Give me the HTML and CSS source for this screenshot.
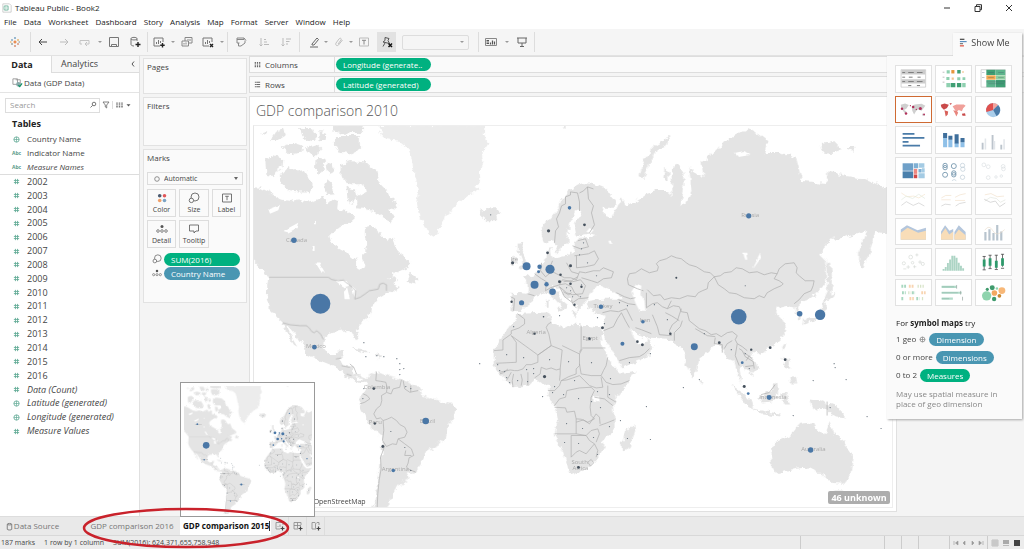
FILE: index.html
```html
<!DOCTYPE html>
<html lang="en">
<head>
<meta charset="utf-8">
<title>Tableau Public - Book2</title>
<link rel="stylesheet" href="styles.css">
</head>
<body>
<svg class="defs" aria-hidden="true">
  <defs>
    <filter id="coast" x="0" y="0" width="100%" height="100%" color-interpolation-filters="sRGB">
      <feTurbulence type="fractalNoise" baseFrequency="0.16" numOctaves="3" seed="4"/>
      <feDisplacementMap in="SourceGraphic" scale="7" xChannelSelector="R" yChannelSelector="G"/>
    </filter>
    <filter id="edge" x="0" y="0" width="100%" height="100%" color-interpolation-filters="sRGB">
      <feTurbulence type="fractalNoise" baseFrequency="0.16" numOctaves="2" seed="9"/>
      <feDisplacementMap in="SourceGraphic" scale="3" xChannelSelector="R" yChannelSelector="G"/>
    </filter>
    <symbol id="ic-num" viewBox="0 0 8 8"><path d="M2.8 1v6M5.2 1v6M1 2.8h6M1 5.2h6" stroke="#63ab97" stroke-width="1" fill="none"/></symbol>
    <symbol id="ic-globe" viewBox="0 0 8 8"><circle cx="4" cy="4" r="3" fill="none" stroke="#63ab97"/><path d="M1 4h6M4 1v6" stroke="#63ab97" stroke-width=".8"/></symbol>
    <symbol id="ic-size" viewBox="0 0 12 12"><circle cx="7" cy="5" r="4" fill="none" stroke="#666" stroke-width=".9"/><circle cx="3.4" cy="8.4" r="2.2" fill="#fafafa" stroke="#666" stroke-width=".9"/></symbol>
    <symbol id="ic-detail" viewBox="0 0 12 12"><circle cx="6" cy="3.6" r="1.5" fill="#555"/><g fill="none" stroke="#666" stroke-width=".8"><circle cx="2" cy="8" r="1.3"/><circle cx="6" cy="8" r="1.3"/><circle cx="10" cy="8" r="1.3"/></g></symbol>

    <g id="world">
      <g filter="url(#coast)" class="land">
        <g transform="translate(250 120) scale(.33333)">
          <path d="M0 200L30 200 60 215 90 235 120 240 150 235 180 245 205 235 225 225 232 250 250 235 265 240 262 265 285 270 295 290 280 310 255 325 238 345 245 368 270 385 300 400 318 415 325 440 338 445 342 420 335 400 350 385 352 365 345 345 345 320 365 315 385 325 395 345 410 360 425 350 432 365 445 395 470 415 482 425 480 440 455 450 430 462 410 475 425 470 440 465 445 478 430 490 450 500 435 510 415 510 400 525 375 540 360 565 355 590 330 610 318 630 327 655 318 658 306 635 290 628 265 632 240 635 222 650 220 680 235 700 255 700 262 690 285 688 280 705 268 718 280 735 306 738 308 765 330 778 350 772 352 782 330 788 300 776 275 748 240 732 200 716 170 700 160 675 135 640 110 612 128 655 142 678 132 672 112 640 96 606 80 592 60 560 50 535 52 490 55 475 45 460 25 435 0 410z"/>
          <path d="M45 115L70 103 100 115 98 135 80 150 70 168 50 165zM100 150L120 140 140 155 165 150 180 175 190 195 175 215 145 215 115 210 95 190 85 170zM60 60L80 30 100 25 105 45 80 60zM95 75L130 65 160 75 158 95 120 100zM150 20L190 22 200 50 185 60 160 50zM165 80L200 70 215 85 190 105zM200 110L220 115 225 145 210 165 198 145zM230 125L250 130 255 150 235 160zM220 190L232 175 250 190 252 220 232 222zM255 45L330 45 330 85 300 100 265 95 255 70zM245 12L340 12 335 35 280 38 245 30zM205 30L235 35 230 60 210 60zM272 130L300 120 350 125 380 150 385 180 410 205 420 230 445 250 440 270 415 265 430 290 425 305 395 290 370 270 350 265 325 262 320 230 345 215 340 190 310 190 285 185 272 165zM290 200L315 205 320 230 300 250 292 230zM275 280L300 275 315 295 300 308 280 300zM480 455L498 470 500 488 470 482zM415 465L432 468 428 476zM30 35L50 30 52 42z"/>
          <path class="ice" d="M385 12L705 12 702 40 715 70 695 100 702 125 690 150 692 180 672 194 690 206 640 235 620 255 590 285 575 310 558 348 530 330 510 290 500 240 507 205 495 165 485 110 475 80 450 60 410 55 395 40z"/>
          <path d="M690 262L705 268 720 262 745 262 750 278 735 298 712 298 695 285z"/>
          <path d="M305 678L330 682 360 697 350 698 320 688zM375 698L400 705 395 712 378 708z"/>
        </g>
        <path transform="translate(350 340) scale(.33333)" d="M80 90L100 100 150 115 205 135 220 165 260 178 300 190 318 205 310 235 290 260 285 300 235 330 215 370 190 400 170 395 180 415 140 440 130 465 105 520 60 520 80 480 85 420 95 340 98 290 60 255 25 190 40 160 55 130 40 112 10 108 0 95 15 98 50 110z"/>
        <path d="M541 233L542 227 555 213 562 198 572 188 583 182 595 183 607 188 616 200 615 207 603 207 605 215 612 217 617 208 622 197 627 205 633 202 647 193 657 190 667 190 673 195 672 167 680 164 685 172 685 185 681 206 687 202 692 192 690 165 696 172 705 177 703 160 713 153 725 140 750 127 768 140 765 152 780 152 797 157 803 180 827 182 827 170 847 175 867 178 887 187 896 188 896 235 877 231 872 246 865 267 860 263 860 250 868 230 847 237 833 238 820 253 827 260 827 280 817 293 803 302 798 307 803 317 799 319 795 307 788 305 780 307 778 313 785 320 787 330 780 340 770 348 760 352 752 350 753 357 760 367 752 375 747 368 740 366 742 383 748 392 744 388 738 373 735 360 728 358 725 350 717 343 712 347 700 358 697 373 693 378 687 365 683 347 677 343 667 338 652 337 646 338 632 330 629 326 637 342 643 345 648 338 655 345 647 358 623 368 618 360 608 343 603 333 603 328 605 315 593 311 587 303 590 300 603 298 622 298 617 292 610 289 600 285 592 290 587 300 584 304 578 310 576 303 567 296 558 287 553 286 562 300 568 305 564 308 555 298 548 292 535 295 530 303 520 310 512 311 511 296 512 292 528 293 528 282 523 278 535 273 540 267 545 262 547 250 551 247 553 258 567 255 575 250 575 242 580 237 593 236 597 234 590 233 577 235 575 227 582 210 577 210 570 222 568 230 568 243 563 246 558 252 555 243 552 240 545 242z"/>
        <path d="M518 243L523 242 523 250 528 262 530 268 519 269 523 261 518 252zM511 258L517 255 518 263 511 266zM640 175L645 160 655 145 673 134 669 142 655 152 648 168 645 178zM562 127l4 -2 0 4zM821 142L835 140 843 148 832 152 822 150zM848 146l8 0 -3 5zM665 168l4 2 0 10 -5 -2zM572 310l6 0 -1 8zM557 307l7 0 -3 4zM546 299l3 0 0 8 -3 0z"/>
        <path d="M828 262L832 262 833 280 831 294 836 292 834 297 827 300 826 312 815 320 805 324 806 318 820 314 825 300 829 290zM785 342l2 2 -3 6 -1 -4zM784 356l6 4 2 8 -5 0zM790 378l6 -2 1 7 -5 0zM701 378l2 2 -1 4zM758 349l5 2 -3 3z"/>
        <path d="M731 384L742 391 752 402 754 408 746 404 738 393zM760 396L770 390 778 382 779 392 773 402 764 403zM782 392l8 -1 -4 5 5 8 -6 0 -3 -6zM752 408l14 3 14 2 0 2 -18 -2zM810 399L822 400 838 406 848 417 838 416 826 409 818 410 812 404z"/>
        <path transform="translate(480 290) scale(.33333)" d="M115 70L205 65 215 95 245 105 255 115 275 100 310 105 360 110 370 130 362 135 368 165 385 200 400 225 425 247 472 240 450 270 410 320 400 345 405 390 405 420 370 450 372 475 355 500 330 530 275 552 265 530 250 490 225 430 235 390 225 345 205 320 210 290 190 282 165 265 145 285 100 290 60 250 42 225 42 180 70 135 90 110 110 80zM465 400L467 425 445 480 428 482 425 455 440 425z"/>
        <path transform="translate(680 120) scale(.33333)" d="M272 980L300 960 335 945 360 910 405 905 410 925 435 945 450 900 465 940 490 960 520 1010 515 1060 490 1090 460 1088 430 1060 415 1060 395 1040 350 1045 285 1060 275 1010zM465 1110L495 1110 485 1140 470 1135z"/>
      </g>
      <g fill="#fff" filter="url(#edge)">
        <path transform="translate(250 120) scale(.33333)" d="M55 265L90 252 85 268 60 278zM100 330L145 305 140 322 115 335zM196 425L208 425 225 455 215 455zM255 478L290 480 300 495 280 500zM282 510L292 500 300 535 284 535zM305 495L318 505 314 530zM188 375h6v15h-6zM192 300h6v10h-6z"/>
        <path d="M632 291L637 283 642 285 641 293 645 300 646 310 640 310 636 302zM755 265L761 253 762 257 754 268zM744 252l3 0 1 8 -2 0zM587 231l3 -4 4 2 -3 4zM609 240l4 0 0 3 -3 0zM735 152l10 -2 6 4 -12 2z"/>
        <path transform="translate(480 290) scale(.33333)" d="M342 318h18v16h-18z"/>
      </g>
      <g class="borders">
        <path transform="translate(250 120) scale(.33333)" d="M57 469H235L245 476 265 480 280 478 295 490 308 500 317 510 315 535 330 530 345 520 358 510 385 505 390 490 400 487 410 492 410 510M98 606L120 612 150 615 170 615 178 622 185 632 193 636 200 630 212 640 220 656M258 715L275 712M300 740L275 735M305 765L290 760"/>
        <path transform="translate(350 340) scale(.33333)" d="M80 95L78 120 92 122 108 125 112 140 110 156 95 165 96 180 92 195 80 205 72 220 80 235 92 232 100 240 102 270 98 300 110 318 128 310 140 312 145 295 165 290 172 275 165 260 150 252 140 240 125 230 112 236 100 240M112 156L124 160 130 145 150 140 155 118M160 120L165 145 180 155 205 150M183 135V155M30 190L45 185 60 175 52 165 40 160M145 295L165 310 185 325 192 345 178 352 175 368 170 380 180 388 198 395M185 345L165 345 168 330M105 315L98 335 92 350 94 385 88 420 84 460 82 505M0 70L12 80 20 100"/>
        <path d="M555 242L556 230 559 226 557 218 560 212 562 205 566 203 566 196 571 194 571 191 578 192 580 201 580 210M580 192L584 190 588 186 589 198 594 205 592 212 595 224 590 232M588 186l6 2M573 245l8 3 8 -2 -3 -8 -8 2M575 255l14 -2 6 -3 4 8 -4 6 -9 2 -9 1 0 -12M553 260l-2 5 0 5 6 3 8 4 6 0 6 2 3 -8 6 1 8 -2 6 0 4 -3 10 4 -2 6 -8 1 -6 4 -6 -2 -10 -3M535 273l7 5 5 3 -1 9 5 -3 9 -3 3 -5 10 2 8 -2 5 6 -3 8 -10 1 -6 -2 -7 -6 5 10 8 6 6 -4 10 -1M560 284l6 -1 6 3 3 6 5 4M511 296l4 2 -1 12M528 293l7 2M542 262l-1 8 5 6 5 -4M617 292l8 4 6 2 5 -1M619 299l10 4 7 1M603 312l8 -2 8 1 8 -3 6 12M604 330l10 -4 4 -8 4 -6M622 312l4 8 4 7M620 360l10 -3 10 -1 5 -3 5 -5M564 281l8 -1 6 -4M567 262l5 9 7 2M564 291l5 3 3 -2M572 299l2 6 3 2"/>
        <path d="M644 290L638 288 629 284 628 278 630 273 636 272 642 268 650 272 658 270 659 266 657 263 660 260 667 258 672 255 677 257 682 258 687 262 690 264 697 266 705 271 711 272 715 276 709 282 708 288 703 290 699 292 696 296 688 295 680 298 672 297 665 299 661 294 654 295 648 289M647 292v15M715 276L721 275 725 272 732 271 737 267 743 268 750 272 758 271 765 274 772 272 778 273 780 268 786 263 795 262 798 267 797 272 800 275 806 280 815 280 814 285 812 290 805 293 800 299 795 303M715 276L719 284 725 288 730 292 737 293 745 297 755 298 760 295 765 297 768 292 775 288 782 285 784 283 780 280 775 278 778 273M647 307L653 303 658 302 663 306 668 308 674 305 680 306 682 311 688 312 690 320 700 328 706 330 712 334 717 333 722 336 728 332 733 331 738 335 736 339 738 343 743 346 748 350M682 308l-2 6 -2 6 -5 4 -3 6 2 5 -12 -1 -2 -8 -5 -12M683 320l-2 6 -6 6 0 8M696 328l12 7 8 1M716 337l-1 6 8 1 0 8M725 348l3 -5 5 -3M738 343l-2 12 4 10M740 348l3 2 3 6 8 5 1 7M745 352l8 6M746 366l8 -1M828 401v14M762 394l8 -2 6 -8M680 320l-8 -5 -6 -3M668 308l4 -8M636 327l6 2 10 4M750 355l-3 5"/>
        <path transform="translate(480 290) scale(.33333)" d="M115 70L135 85 135 100 118 112 95 120 95 130 70 148 70 178 42 180M95 135L110 155 110 215 50 218M95 135L175 193 215 165 208 130 200 110 206 100 215 95M175 193L175 215 155 222 140 222 130 235 115 240 105 240 92 238 60 245M175 193L215 165 248 178 242 235 230 238 215 232 200 236 185 230 182 250 165 262M248 165L300 190V225L290 235 290 250 268 258 245 270 240 285 225 300 205 300M300 185L305 175V105M308 172H378M308 175L300 190M300 220L305 250 335 255 365 255 372 240 380 225 385 200M242 235V250L240 270M245 270L262 268 280 262 300 255 315 270 330 285 350 292 370 290 365 260M365 255L380 275 400 282 425 280 450 270M385 285V320L410 335M262 300L300 292 335 290 345 300 335 320 332 350 335 375 345 385 325 395 305 386 290 385 285 362 262 365 258 352 225 350M262 300L258 320 240 325 225 345M290 385V430H225M290 395L312 388 330 400 350 370 360 380 362 400M290 430L320 435 335 420 355 415M360 405L380 398 405 388M275 500V435L320 435M275 500L290 485 300 480 320 490 345 460 355 480 350 500M320 435L330 450 345 460M355 415L360 430 350 455M345 320L375 325 400 345M100 290L98 270 102 250M125 285L128 268 124 250M145 285V245M80 270L88 258 95 245M60 250L72 246 85 235M325 515l10 -8 8 10 -10 10z"/>
      </g>
      <g class="tiny">
        <path d="M364 342h.1M377 355h.1M384 356h.1M397 358h.1M400 363h.1M400 369h.1M404 368h.1M400 374h.1M366 356h.1M480 363h.1M364 388h.1M391 431h.1M405 447h.1M411 470h.1M411 388h.1M363 398h.1M406 386h.1M491 214h.1M684 387h.1M647 406h.1M651 439h.1M621 420h.1M814 380h.1M836 367h.1M835 363h.1M847 379h.1M868 416h.1M882 428h.1M831 407h.1M746 285h.1M677 277h.1M705 333h.1M732 349h.1M746 353h.1M750 368h.1M794 415h.1M655 304h.1M668 319h.1M700 379h.1M651 353h.1M630 362h.1M597 275h.1M588 262h.1M584 242h.1M582 248h.1M580 254h.1M582 284h.1M571 290h.1M573 296h.1M567 287h.1M581 296h.1M560 315h.1M598 317h.1M605 323h.1M620 302h.1M628 305h.1M507 354h.1M524 357h.1M550 359h.1M569 361h.1M592 362h.1M514 326h.1M575 380h.1M555 386h.1M579 398h.1M601 407h.1M611 378h.1M610 394h.1M567 423h.1M583 428h.1M594 437h.1M565 442h.1M579 443h.1M610 426h.1M628 438h.1M598 391h.1M592 401h.1M598 454h.1M543 396h.1M527 369h.1M534 368h.1M518 380h.1M507 377h.1M510 382h.1M498 364h.1M505 371h.1M500 370h.1M528 381h.1M534 373h.1M553 392h.1M564 394h.1"/>
      </g>
      <g class="maplabel">
        <text x="286" y="241">Canada</text><text x="306" y="347">Mexico</text><text x="364" y="388">Colombia</text><text x="369" y="423">Peru</text><text x="420" y="422">Brazil</text><text x="382" y="471">Argentina</text><text x="742" y="216">Russia</text><text x="802" y="451">Australia</text><text x="527" y="333">Algeria</text><text x="583" y="339">Egypt</text><text x="572" y="464">South</text><text x="573" y="470">Africa</text><text x="594" y="307">Turkey</text><text x="760" y="398">Indonesia</text><text x="511" y="260">Ire</text><text x="640" y="321">Iran</text>
      </g>
      <g class="mid">
        <circle cx="548" cy="252" r="1.4"/><circle cx="513" cy="262" r="1.6"/><circle cx="549" cy="230" r="1.6"/><circle cx="585" cy="224" r="1.4"/><circle cx="571" cy="265" r="1.5"/><circle cx="561" cy="274" r="1.3"/><circle cx="560" cy="281" r="1.5"/><circle cx="571" cy="283" r="1.3"/><circle cx="582" cy="286" r="1.2"/><circle cx="512" cy="301" r="1.2"/><circle cx="575" cy="304" r="1.2"/><circle cx="535" cy="333" r="1.2"/><circle cx="590" cy="338" r="1.3"/><circle cx="545" cy="376" r="1.6"/><circle cx="603" cy="327" r="1.5"/><circle cx="638" cy="341" r="1.3"/><circle cx="671" cy="333" r="1.3"/><circle cx="579" cy="467" r="1.4"/><circle cx="374" cy="388" r="1.4"/><circle cx="375" cy="423" r="1.2"/><circle cx="383" cy="446" r="1.4"/><circle cx="720" cy="342" r="1.4"/><circle cx="752" cy="349" r="1.2"/><circle cx="771" cy="347" r="1.4"/><circle cx="786" cy="359" r="1.4"/><circle cx="745" cy="386" r="1.5"/><circle cx="677" cy="277" r="1"/><circle cx="544" cy="316" r=".8"/><circle cx="643" cy="344" r="1.5"/>
      </g>
      <g class="big">
        <circle cx="320.500" cy="303" r="10"/><circle cx="739.500" cy="316" r="7.800"/><circle cx="821" cy="314" r="5.200"/><circle cx="550.500" cy="268.500" r="4.600"/><circle cx="527" cy="265.500" r="4"/><circle cx="535" cy="284" r="4"/><circle cx="553" cy="291" r="3.300"/><circle cx="522" cy="302" r="2.600"/><circle cx="547" cy="283.500" r="2.200"/><circle cx="540" cy="266" r="2.200"/><circle cx="539" cy="271" r="1.500"/><circle cx="570" cy="207" r="1.800"/><circle cx="601.500" cy="306" r="2.200"/><circle cx="643.500" cy="321" r="1.800"/><circle cx="623" cy="343" r="2"/><circle cx="695" cy="346" r="3.500"/><circle cx="800.500" cy="313" r="2.800"/><circle cx="749.500" cy="215" r="2.600"/><circle cx="811.500" cy="449.500" r="2.700"/><circle cx="770" cy="397" r="2.500"/><circle cx="743" cy="362" r="1.400"/><circle cx="749" cy="393" r="1.400"/><circle cx="294" cy="239.500" r="2.800"/><circle cx="314.500" cy="346.500" r="2.300"/><circle cx="426" cy="420.500" r="3.300"/><circle cx="393.500" cy="470" r="1.800"/>
      </g>
    </g>
  </defs>
</svg>

<div class="app">
  <header class="titlebar">
    <svg class="appicon" viewBox="0 0 12 12"><path d="M1 1h8l2 2v8H1z" fill="#fff" stroke="#bbb" stroke-width=".8"/><circle cx="5" cy="6" r="3.500" fill="#9ccbbb"/><path d="M5 3v6M2 6h6" stroke="#fff" stroke-width=".8"/></svg>
    <h1>Tableau Public - Book2</h1>
    <div class="winbtns">
      <button aria-label="Minimize"><svg viewBox="0 0 10 10"><path d="M2 5h6"/></svg></button>
      <button aria-label="Restore"><svg viewBox="0 0 10 10"><path d="M2 3.500h5v5H2zM3.500 3.500V1.700h5v5H7"/></svg></button>
      <button aria-label="Close"><svg viewBox="0 0 10 10"><path d="M2 2l6 6M8 2l-6 6"/></svg></button>
    </div>
  </header>
  <nav class="menu">
    <button>File</button><button>Data</button><button>Worksheet</button><button>Dashboard</button><button>Story</button><button>Analysis</button><button>Map</button><button>Format</button><button>Server</button><button>Window</button><button>Help</button>
  </nav>

  <div class="toolbar">
    <div class="grp g1"><button aria-label="Start"><svg viewBox="0 0 12 12" stroke-width="1.200"><path d="M6 4.400v3.200M4.400 6h3.200" stroke="#e8762c"/><path d="M6 1v2M3 3.200v1.600M2.200 4h1.600" stroke="#5b8fb5"/><path d="M6 9v2M9 7.200v1.600M8.200 8h1.600" stroke="#c75"/><path d="M9 3.200v1.600M8.200 4h1.600M1 6h1.500" stroke="#e0a040"/><path d="M3 7.200v1.600M2.200 8h1.600M9.500 6H11" stroke="#788"/></svg></button></div>
    <div class="grp g2">
      <button aria-label="Back"><svg viewBox="0 0 12 12"><path d="M10 6H2M5 3L2 6l3 3" stroke="#444"/></svg></button>
      <button aria-label="Forward"><svg viewBox="0 0 12 12"><path d="M2 6h8M7 3l3 3-3 3" stroke="#bbb"/></svg></button>
      <button aria-label="Redo"><svg viewBox="0 0 12 12"><path d="M3 8H1V4.500h9V8H6M8 6L6 8l2 2" stroke="#c4c4c4"/></svg></button>
      <button class="caret" aria-label="Redo menu"></button>
      <button aria-label="Save"><svg viewBox="0 0 12 12"><path d="M1.500 1.500h9v9h-9zM3.500 10.500v-2h5v2" stroke="#777"/></svg></button>
      <button aria-label="New data source"><svg viewBox="0 0 12 12"><path d="M8 5V2.500C8 1 2 1 2 2.500v6C2 9.500 4 10 5 10M2 3c1 1.300 5 1.300 6 0" stroke="#777"/><path d="M9 6v5M6.500 8.500h5" stroke="#222" stroke-width="1.400"/></svg></button>
    </div>
    <div class="grp g3">
      <button aria-label="New worksheet"><svg viewBox="0 0 12 12"><path d="M7 10H1V2h9v4M3.500 8V6M5.500 8V4M7.500 7V5" stroke="#777"/><path d="M9.500 7v4.500M7.200 9.200h4.500" stroke="#222" stroke-width="1.400"/></svg></button>
      <button class="caret" aria-label="New menu"></button>
      <button aria-label="Duplicate"><svg viewBox="0 0 12 12"><path d="M4 5V1.500h7V7H8M1 5h6.500v5H1zM3 8.500V7M5 8.500V6.500M7 4.500V3M9 5V3" stroke="#888"/></svg></button>
      <button aria-label="Clear sheet"><svg viewBox="0 0 12 12"><path d="M7 10H1V2h9v4M3.500 8V6M5.500 8V4M7.500 7V5" stroke="#777"/><path d="M8 8l3 3M11 8l-3 3" stroke="#222" stroke-width="1.400"/></svg></button>
      <button class="caret" aria-label="Clear menu"></button>
    </div>
    <div class="grp g4">
      <button aria-label="Swap"><svg viewBox="0 0 12 12"><path d="M2 3.500h7V2l2 2.500M2 2v5h2.500M3.500 7v3h2.500l4-3V4.500M2 2h7" stroke="#888"/></svg></button>
      <button aria-label="Sort ascending"><svg viewBox="0 0 12 12"><path d="M3 2v8M1.500 8.500L3 10l1.500-1.500M6 3.500h2M6 6h3M6 8.500h5" stroke="#bbb"/></svg></button>
      <button aria-label="Sort descending"><svg viewBox="0 0 12 12"><path d="M3 2v8M1.500 8.500L3 10l1.500-1.500M6 3h5M6 5.500h3.500M6 8h2" stroke="#bbb"/></svg></button>
    </div>
    <div class="grp g5">
      <button aria-label="Highlight"><svg viewBox="0 0 12 12"><path d="M4 8l5-6 1.500 1.500L6 9H4zM2 11h8" stroke="#666"/></svg></button>
      <button class="caret" aria-label="Highlight menu"></button>
      <button aria-label="Group"><svg viewBox="0 0 12 12"><path d="M5 8l3-4c1-1.500-1-2.500-2-1L3 7c-1 2 1 3.500 2.500 2L9.500 4" stroke="#c0c0c0"/></svg></button>
      <button class="caret" aria-label="Group menu"></button>
      <button aria-label="Show labels"><svg viewBox="0 0 12 12"><path d="M1.500 2h9v8h-9z" stroke="#bbb"/><path d="M4 4.300h4M6 4.300V8.500" stroke="#888"/></svg></button>
      <button class="on" aria-label="Fix axes"><svg viewBox="0 0 12 12"><path d="M4 1.500l4 1-1 2 1.500 3L2 6l2-1.500zM4 7l-2 3.500" stroke="#555"/><path d="M7.500 7.500l3.500 3.500M11 7.500L7.500 11" stroke="#111" stroke-width="1.500"/></svg></button>
      <span class="fit"><select aria-label="Fit"><option></option></select></span>
    </div>
    <div class="grp g6">
      <button aria-label="Cards"><svg viewBox="0 0 12 12"><path d="M.5 2.500h11v7H.5z" stroke="#888"/><path d="M1.500 4.500h2.500M1.500 6h2.500M1.500 7.500h2.500M5.500 8.500v-2M7.500 8.500v-4M9.500 8.500v-3" stroke="#555" stroke-width="1.200"/></svg></button>
      <button class="caret" aria-label="Cards menu"></button>
      <button aria-label="Presentation"><svg viewBox="0 0 12 12"><path d="M1 2h10M2 2v5h8V2M6 7v3M4 10.500h4" stroke="#666"/></svg></button>
    </div>
  </div>

  <main class="body">
    <aside class="side">
      <div class="tabs"><button class="active">Data</button><button>Analytics</button><button class="fold" aria-label="Collapse"><svg viewBox="0 0 6 8"><path d="M4 1.500L2 4l2 2.500" stroke="#555" fill="none"/></svg></button></div>
      <div class="source"><svg viewBox="0 0 12 12"><path d="M1 2h5v6H1zM4 3h5v5" fill="none" stroke="#999"/><circle cx="7" cy="8" r="2.500" fill="#8aa"/><path d="M7 9l1.500 1.500L11 7" stroke="#0a8f62" stroke-width="1.200" fill="none"/></svg><span>Data (GDP Data)</span></div>
      <div class="find">
        <label class="box"><input type="text" placeholder="Search" aria-label="Search"><svg viewBox="0 0 8 8"><circle cx="5" cy="3" r="1.800" fill="none" stroke="#777"/><path d="M3.700 4.300L1.500 6.500" stroke="#777"/></svg></label>
        <button aria-label="Filter"><svg viewBox="0 0 8 8"><path d="M1 1h6L4.700 4v3l-1.400-1V4z" fill="none" stroke="#666" stroke-width=".8"/></svg></button>
        <button class="view" aria-label="View"><svg viewBox="0 0 16 8"><path d="M2 1.500v5M4.500 1.500v5M7 1.500v5" stroke="#777" stroke-width="1.500" stroke-dasharray="1.300 .500"/><path d="M11.500 3.200h4l-2 2.400z" fill="#555"/></svg></button>
      </div>
      <h2>Tables</h2>
      <ul class="dims">
        <li><svg><use href="#ic-globe"/></svg>Country Name</li>
        <li><b>Abc</b>Indicator Name</li>
        <li><b>Abc</b><i>Measure Names</i></li>
      </ul>
      <ul class="meas">
        <li><svg><use href="#ic-num"/></svg>2002</li>
        <li><svg><use href="#ic-num"/></svg>2003</li>
        <li><svg><use href="#ic-num"/></svg>2004</li>
        <li><svg><use href="#ic-num"/></svg>2005</li>
        <li><svg><use href="#ic-num"/></svg>2006</li>
        <li><svg><use href="#ic-num"/></svg>2007</li>
        <li><svg><use href="#ic-num"/></svg>2008</li>
        <li><svg><use href="#ic-num"/></svg>2009</li>
        <li><svg><use href="#ic-num"/></svg>2010</li>
        <li><svg><use href="#ic-num"/></svg>2011</li>
        <li><svg><use href="#ic-num"/></svg>2012</li>
        <li><svg><use href="#ic-num"/></svg>2013</li>
        <li><svg><use href="#ic-num"/></svg>2014</li>
        <li><svg><use href="#ic-num"/></svg>2015</li>
        <li><svg><use href="#ic-num"/></svg>2016</li>
        <li><svg><use href="#ic-num"/></svg><i>Data (Count)</i></li>
        <li><svg><use href="#ic-globe"/></svg><i>Latitude (generated)</i></li>
        <li><svg><use href="#ic-globe"/></svg><i>Longitude (generated)</i></li>
        <li><svg><use href="#ic-num"/></svg><i>Measure Values</i></li>
      </ul>
    </aside>

    <section class="cards">
      <div class="card pages"><h3>Pages</h3></div>
      <div class="card filters"><h3>Filters</h3></div>
      <div class="card marks">
        <h3>Marks</h3>
        <div class="picker"><svg viewBox="0 0 8 8"><circle cx="4" cy="4" r="2.300" fill="none" stroke="#777" stroke-width=".8"/></svg><select aria-label="Mark type"><option>Automatic</option></select></div>
        <div class="btns">
          <button><svg viewBox="0 0 12 12"><circle cx="3.700" cy="3.700" r="1.800" fill="#4a5a70"/><circle cx="8.500" cy="3.700" r="1.800" fill="#e15759"/><circle cx="3.700" cy="8.500" r="1.800" fill="#f0a06a"/><circle cx="8.500" cy="8.500" r="1.800" fill="#7ba3c4"/></svg>Color</button>
          <button><svg><use href="#ic-size"/></svg>Size</button>
          <button><svg viewBox="0 0 12 12"><path d="M1.500 2h9v8h-9zM4.200 4.300h3.600M6 4.300v3.900" fill="none" stroke="#666" stroke-width=".9"/></svg>Label</button>
          <button><svg><use href="#ic-detail"/></svg>Detail</button>
          <button><svg viewBox="0 0 12 12"><path d="M1.500 2h9v6H8l-2 2V8H1.500z" fill="none" stroke="#666" stroke-width=".9"/></svg>Tooltip</button>
        </div>
        <div class="enc"><svg><use href="#ic-size"/></svg><span class="pill green">SUM(2016)</span></div>
        <div class="enc"><svg><use href="#ic-detail"/></svg><span class="pill blue">Country Name</span></div>
      </div>
    </section>

    <section class="sheet">
      <div class="shelf"><span class="name"><svg viewBox="0 0 8 8"><path d="M1.500 1v6M4 1v6M6.500 1v6" stroke="#666" stroke-width="1.400" stroke-dasharray="1.200 .400"/></svg>Columns</span><span class="drop"><span class="pill green">Longitude (generate..</span></span></div>
      <div class="shelf"><span class="name"><svg viewBox="0 0 8 8"><path d="M1 1.500h6M1 4h6M1 6.500h6" stroke="#666" stroke-width="1.200" stroke-dasharray="1.200 .400 9"/></svg>Rows</span><span class="drop"><span class="pill green">Latitude (generated)</span></span></div>
      <div class="viz">
        <h2>GDP comparison 2010</h2>
        <div class="mapbox">
          <svg class="map" viewBox="254 125 639 383" preserveAspectRatio="xMinYMin slice"><use href="#world"/></svg>
          <span class="credit">© OpenStreetMap</span>
          <button class="unknown">46 unknown</button>
        </div>
      </div>
    </section>

    <aside class="showme">
      <button class="smtab"><svg viewBox="0 0 10 10"><path d="M1 1.500h5" stroke="#555" stroke-width="1.500"/><path d="M1 4h7.500" stroke="#5b8fc0" stroke-width="1.300"/><path d="M1 6.300h3.500" stroke="#777" stroke-width="1.300"/><path d="M1 8.700h4.500" stroke="#e06050" stroke-width="1.500"/></svg>Show Me</button>
      <div class="smbody">
        <div class="grid">
          <button aria-label="Text table"><svg viewBox="47 197 108 82"><path d="M61 209h79v56H61z" fill="#fff" stroke="#bbb" stroke-width="2"/><path d="M62 210h77v14H62zM62 240h77v13H62z" fill="#ccc"/><path d="M65 218h9M84 218h18M112 218h18M65 233h9M86 233h12M114 233h10M65 247h9M84 247h18M112 247h18M84 260h10M112 260h10" stroke="#777" stroke-width="3"/></svg></button>
          <button aria-label="Heat map"><svg viewBox="167 197 108 82"><g fill="#3f9f74"><path d="M233 210h11v11h-11zM213 252h14v13h-14zM232 252h14v13h-14z"/><path fill="#8fd0b0" d="M199 211h10v10h-10zM198 232h10v10h-10zM233 233h10v10h-10zM250 233h9v9h-9zM198 252h14v13h-14zM249 252h11v13h-11z"/><path fill="#e8963c" d="M214 210h10v11h-10z"/><path fill="#f3c48e" d="M249 214h5v5h-5zM215 234h7v7h-7z"/></g><path d="M186 217h6M186 233h6M186 249h6" stroke="#999" stroke-width="2"/></svg></button>
          <button aria-label="Highlight table"><svg viewBox="288 197 108 82"><path d="M302 209h78v56h-78z" fill="#fff" stroke="#bbb" stroke-width="2"/><path d="M319 209h30v17h-30zM350 241h30v24h-30z" fill="#3f9f74"/><path d="M350 209h30v17h-30zM319 242h30v23h-30z" fill="#5db48c"/><path d="M319 227h30v14h-30z" fill="#f0a850"/><path d="M350 227h30v13h-30z" fill="#8fd0a0"/><path d="M325 218h18M357 218h18M325 234h18M357 234h18M325 254h50M305 218h8M305 234h8M319 248h61" stroke="#456" stroke-opacity=".5" stroke-width="2"/></svg></button>
          <button class="sel" aria-label="Symbol map"><svg viewBox="47 288 108 82"><path d="M60 313l14-4 12 5-8 12-8 4 8 4-2 10-6-8-8-12zM95 318l10-6 22-2 12 6-4 6-8 10-12-4-6 6-6 10-6-12zM128 342l8 0 2 6-8 0z" fill="#cfcfcf"/><g fill="#b0305a"><circle cx="64" cy="326" r="4"/><circle cx="77" cy="341" r="4"/><circle cx="100" cy="320" r="4"/><circle cx="123" cy="325" r="5"/><circle cx="135" cy="344" r="3"/><circle cx="110" cy="328" r="2"/><circle cx="91" cy="316" r="2"/></g></svg></button>
          <button aria-label="Filled map"><svg viewBox="167 288 108 82"><path d="M180 313l12-4 14 4-6 10-10 6-8-8z" fill="#c94a4a"/><path d="M192 331l12 4-2 10-6 6-2-10z" fill="#d8605a"/><path d="M208 308l8 0-4 6z" fill="#c94a4a"/><path d="M218 318l12-6 24 0 6 4-8 8-4 10-10-4-8 6z" fill="#f0a09a"/><path d="M220 331l12 2 4 6-6 12-4-10z" fill="#e8867e"/><path d="M248 342l10-2 2 8-10 0z" fill="#c94a4a"/></svg></button>
          <button aria-label="Pie chart"><svg viewBox="288 288 108 82"><circle cx="341" cy="330" r="23" fill="#a9cdea"/><path d="M341 330V307A23 23 0 0 0 319 336z" fill="#e0504e"/><path d="M341 330V307A23 23 0 0 1 357 314z" fill="#f4a49c"/><path d="M341 330L357 314A23 23 0 0 1 352 350z" fill="#4a7ba8"/></svg></button>
          <button aria-label="Horizontal bars"><svg viewBox="47 379 108 82"><path d="M66 401h38M66 414h70M66 427h19M66 439h56" stroke="#4a7ba8" stroke-width="6"/></svg></button>
          <button aria-label="Stacked bars"><svg viewBox="167 379 108 82"><path d="M194 414v30M211 420v24M231 430v14M250 428v16" stroke="#8fc0e8" stroke-width="13"/><path d="M194 398v16M211 407v13M231 402v30M250 414v14" stroke="#3f6f9c" stroke-width="13"/></svg></button>
          <button aria-label="Side-by-side bars"><svg viewBox="288 379 108 82"><path d="M307 430v21M339 405v46M367 436v15" stroke="#bcc4cc" stroke-width="6"/><path d="M316 416v35M345 424v27M376 418v33" stroke="#e2e6ea" stroke-width="5"/></svg></button>
          <button aria-label="Treemap"><svg viewBox="47 470 108 82"><path d="M66 487h34v24H66z" fill="#6fa0c8"/><path d="M66 513h34v22H66z" fill="#4a80ac"/><path d="M102 487h14v16h-14zM117 505h10v12h-10z" fill="#7fb0d4"/><path d="M118 487h18v14h-18zM128 503h9v14h-9zM117 519h20v16h-20z" fill="#a4cbe4"/><path d="M102 505h11v16h-11z" fill="#ee8880"/><path d="M102 523h11v12h-11z" fill="#d04848"/></svg></button>
          <button aria-label="Circle views"><svg viewBox="167 470 108 82"><g fill="none" stroke="#7a9ab0" stroke-width="3"><circle cx="194" cy="494" r="7"/><circle cx="194" cy="501" r="7"/><circle cx="194" cy="524" r="8"/><circle cx="222" cy="496" r="8"/><circle cx="222" cy="518" r="7"/><circle cx="222" cy="524" r="7"/></g><g fill="none" stroke="#b8c8d4" stroke-width="2"><circle cx="250" cy="494" r="7"/><circle cx="251" cy="506" r="7"/><circle cx="250" cy="532" r="7"/><path d="M216 543q7-8 14 0"/></g></svg></button>
          <button aria-label="Side-by-side circles"><svg viewBox="288 470 108 82"><g fill="none" stroke="#d8dde0" stroke-width="2"><circle cx="311" cy="492" r="6"/><circle cx="325" cy="498" r="6"/><circle cx="325" cy="533" r="6"/><circle cx="373" cy="497" r="6"/><circle cx="374" cy="505" r="6"/><circle cx="350" cy="531" r="4"/><circle cx="367" cy="528" r="4"/></g></svg></button>
          <button aria-label="Lines (continuous)"><svg viewBox="47 8 108 82"><g fill="none" stroke-width="2"><path d="M62 24l18 12 22-2 16 6 20-12" stroke="#f3e4cc"/><path d="M62 46l16-12 20 8 20-14 20 14" stroke="#dfe8dc"/><path d="M62 64l16-12 22 12 18-8 18 10" stroke="#c8c8c8"/></g></svg></button>
          <button aria-label="Lines (discrete)"><svg viewBox="167 8 108 82"><g fill="none" stroke-width="2"><path d="M182 40l14-8 18 0M226 38l16-8 18-4M182 46h30M226 48h32" stroke="#f0dfc8"/><path d="M182 66l12-6 18 2M228 66l12-8 20-4" stroke="#c8c8c8"/></g></svg></button>
          <button aria-label="Dual lines"><svg viewBox="288 8 108 82"><g fill="none" stroke-width="2"><path d="M314 30l20-4 20 10 22-2" stroke="#f0dfc8"/><path d="M314 50l18-12 20 4 12 12 16-8" stroke="#dfe4dc"/><path d="M312 44l20 10 16-4 14 18 18-12" stroke="#c4c4c4"/></g></svg></button>
          <button aria-label="Area (continuous)"><svg viewBox="47 98 108 82"><path d="M60 132l20-14 34 16 27-8v39H60z" fill="#b4c6dc"/><path d="M60 142l22-16 34 16 25-6v29H60z" fill="#f8ddb8"/></svg></button>
          <button aria-label="Area (discrete)"><svg viewBox="167 98 108 82"><path d="M181 138l13-20 14 18 12-6v35h-39zM224 140l14-22 22 22v25h-36z" fill="#b4c6dc"/><path d="M181 148l14-20 12 20 13-10v27h-39zM224 150l14-18 22 18v15h-36z" fill="#f8ddb8"/></svg></button>
          <button aria-label="Dual combination"><svg viewBox="288 98 108 82"><path d="M316 140v27M329 131v36M342 143v24M354 117v50M367 138v29" stroke="#b8c4ce" stroke-width="7"/><path d="M314 134q14-20 26 2t38-4" fill="none" stroke="#e8dccc" stroke-width="2"/></svg></button>
          <button aria-label="Scatter plot"><svg viewBox="47 188 108 82"><g fill="none" stroke="#d4d8d4" stroke-width="2"><circle cx="92" cy="214" r="6"/><circle cx="70" cy="234" r="5"/><circle cx="98" cy="232" r="4"/><circle cx="131" cy="236" r="5"/><path d="M112 202v10M107 207h10M84 240v12M78 246h12M122 224v12M116 230h12M68 252h10M104 240v10M100 245h10"/></g></svg></button>
          <button aria-label="Histogram"><svg viewBox="167 188 108 82"><path d="M189 252v6M196 246v12M203 233v25M210 222v36M217 210v48M224 210v48M231 216v42M238 232v26M245 242v16M252 250v8" stroke="#acd4c4" stroke-width="6"/></svg></button>
          <button aria-label="Box plot"><svg viewBox="288 188 108 82"><path d="M312 212v42M307 212h10M307 255h10M331 208v42M326 208h10M326 251h10M351 208v44M346 208h10M346 254h10M371 205v40M366 205h10M366 250h10" stroke="#444" stroke-width="2.500"/><path d="M312 222v22M331 218v24M351 226v22M371 218v24" stroke="#2f9a6c" stroke-width="9"/></svg></button>
          <button aria-label="Gantt"><svg viewBox="47 280 108 82"><path d="M62 300h16M64 321h12M62 340h6M96 321h10M110 340h10" stroke="#a8d8c0" stroke-width="10" stroke-dasharray="6 3"/><path d="M86 300h16M126 321h14M88 340h14" stroke="#f8d4b0" stroke-width="10" stroke-dasharray="6 3"/><path d="M114 300h22M84 321h10M128 340h8" stroke="#d8e4c8" stroke-width="10" stroke-dasharray="4 4"/></svg></button>
          <button aria-label="Bullet graph"><svg viewBox="167 280 108 82"><path d="M183 302h48M183 321h64M183 340h36" stroke="#b4dccb" stroke-width="7"/><path d="M183 302h40M183 321h52M183 340h24" stroke="#8cb8a8" stroke-width="2"/><path d="M231 296v12M244 315v12M250 334v12" stroke="#8a9a94" stroke-width="2"/></svg></button>
          <button aria-label="Packed bubbles"><svg viewBox="288 280 108 82"><circle cx="320" cy="331" r="15" fill="#8fd4ae"/><g fill="#3f9a6c"><circle cx="338" cy="305" r="8"/><circle cx="322" cy="310" r="5"/><circle cx="344" cy="341" r="7"/></g><circle cx="369" cy="314" r="11" fill="#f8b878"/><circle cx="345" cy="322" r="9" fill="#f4a860"/><circle cx="361" cy="331" r="6" fill="#c88830"/><circle cx="353" cy="307" r="4" fill="#8fd4ae"/></svg></button>
        </div>
        <p class="try">For <strong>symbol maps</strong> try</p>
        <p class="need">1 geo <svg viewBox="0 0 8 8"><circle cx="4" cy="4" r="2.800" fill="none" stroke="#888" stroke-width=".9"/><path d="M1 4h6M4 1v6" stroke="#888" stroke-width=".8"/></svg><span class="pill blue">Dimension</span></p>
        <p class="need">0 or more <span class="pill blue">Dimensions</span></p>
        <p class="need">0 to 2 <span class="pill green">Measures</span></p>
        <p class="note">May use spatial measure in place of geo dimension</p>
      </div>
    </aside>
  </main>

  <footer>
    <div class="sheets">
      <button class="ds"><svg viewBox="0 0 8 8"><path d="M2 2v4.500c0 .800 4 .800 4 0V2c0-1-4-1-4 0zc0 .800 4 .800 4 0" fill="none" stroke="#777" stroke-width=".8"/></svg>Data Source</button>
      <button class="s2016">GDP comparison 2016</button>
      <label class="s2015"><input type="text" value="GDP comparison 2015" aria-label="Sheet name"><span class="cursor"></span></label>
      <button class="add" aria-label="New worksheet"><svg viewBox="0 0 10 10"><path d="M5 8H1V1.500h7V4M3 6V5M5 6V3.500"/><path d="M7.500 5.500v4M5.500 7.500h4" class="plus"/></svg></button>
      <button class="add" aria-label="New dashboard"><svg viewBox="0 0 10 10"><path d="M5 8H1V1.500h7V4M1 4.500h7M4.500 1.500v6"/><path d="M7.500 5.500v4M5.500 7.500h4" class="plus"/></svg></button>
      <button class="add" aria-label="New story"><svg viewBox="0 0 10 10"><path d="M5 8H1V1.500h3l1 1 1-1h2V4M4.500 2.500v5"/><path d="M7.500 5.500v4M5.500 7.500h4" class="plus"/></svg></button>
      <div class="preview"><svg viewBox="254 125 384 387" preserveAspectRatio="xMinYMin slice"><use href="#world"/></svg></div>
      <svg class="ring" viewBox="0 0 208 42"><ellipse cx="104" cy="21" rx="102" ry="19" fill="none" stroke="#c9222b" stroke-width="2.500"/></svg>
    </div>
    <div class="status">
      <span>187 marks</span><span>1 row by 1 column</span><span>SUM(2016): 624,371,655,758,948</span>
      <div class="seps"><i class="c84"></i><i class="c17"></i><i class="c17"></i><i class="c31"></i>
        <div class="pager"><button aria-label="First"><svg viewBox="0 0 6 6"><path d="M1 1v4M5 1L2.500 3 5 5z"/></svg></button><button aria-label="Previous"><svg viewBox="0 0 6 6"><path d="M4 1L2 3l2 2z"/></svg></button><button aria-label="Next"><svg viewBox="0 0 6 6"><path d="M2 1l2 2-2 2z"/></svg></button><button aria-label="Last"><svg viewBox="0 0 6 6"><path d="M5 1v4M1 1l2.500 2L1 5z"/></svg></button></div>
        <div class="modes"><button aria-label="Grid view"><svg viewBox="0 0 8 8"><path d="M1 1h6v6H1zM3 1v6M5 1v6M1 3h6M1 5h6" fill="none" stroke="#aaa" stroke-width=".6"/></svg></button><button aria-label="Filmstrip"><svg viewBox="0 0 8 8"><path d="M1 1h6v4H1z" fill="#aaa"/><path d="M1 6.500h6" stroke="#bbb"/></svg></button><button aria-label="Sheet view"><svg viewBox="0 0 8 8"><path d="M1 1h6v6H1z" fill="#444"/></svg></button></div>
      </div>
    </div>
  </footer>
</div>
</body>
</html>
```
FILE: styles.css
```css
* { box-sizing: border-box; }
body { margin: 0; font: 8px/10px "Open Sans", "Noto Sans", sans-serif; color: #444; background: #fff; }
h1, h2, h3, p, ul { margin: 0; padding: 0; font-weight: 400; }
ul { list-style: none; }
button { font: inherit; color: inherit; background: none; border: 0; padding: 0; display: flex; align-items: center; justify-content: center; }
input, select { font: inherit; color: inherit; border: 0; background: none; padding: 0; margin: 0; min-width: 0; outline: 0; appearance: none; }
.defs { position: absolute; width: 0; height: 0; }
.app { min-height: 100vh; display: flex; flex-direction: column; }

.titlebar { height: 15px; display: flex; align-items: center; padding: 0 0 0 2px; gap: 3px; color: #222; }
.titlebar h1 { font-size: 8px; line-height: 15px; flex: 1; }
.appicon { width: 10px; height: 10px; }
.winbtns { display: flex; }
.winbtns button { width: 31px; height: 15px; }
.winbtns svg { width: 10px; height: 10px; fill: none; stroke: #333; stroke-width: 1; }
.menu { height: 14px; display: flex; gap: 7px; padding-left: 4px; color: #222; }

.toolbar { height: 27px; background: #f5f5f5; border-bottom: 1px solid #e2e2e2; display: flex; align-items: center; }
.grp { display: flex; align-items: center; justify-content: space-evenly; height: 20px; border-right: 1px solid #ddd; }
.g1 { width: 31px; } .g2 { width: 117px; } .g3 { width: 80px; } .g4 { width: 72px; } .g6 { width: 56px; }
.g5 { width: 179px; justify-content: flex-start; padding-left: 4px; }
.grp button { width: 19px; height: 20px; }
.grp svg { width: 12px; height: 12px; fill: none; }
.grp .caret { width: 6px; }
.caret::after, .fit::after { content: ""; border: 2px solid transparent; border-top-color: #999; border-bottom: 0; }
.grp .on { background: #e2e2e2; margin: 0 6px 0 4px; }
.fit { display: flex; align-items: center; width: 67px; height: 15px; padding-right: 4px; border: 1px solid #ddd; border-radius: 2px; }
.fit select { flex: 1; }

.body { flex: 1; display: grid; grid-template-columns: 140px 107px minmax(0, 1fr); background: #f4f4f4; position: relative; }
.side { background: #fff; border-right: 1px solid #e0e0e0; }
.tabs { display: flex; height: 17px; font-size: 9px; }
.tabs button { background: #f7f7f7; border-bottom: 1px solid #ddd; border-left: 1px solid #ddd; width: 56px; }
.tabs .active { width: 51px; background: #fff; border: 0; font-weight: 700; color: #222; padding-right: 7px; }
.tabs .fold { flex: 1; border-left: 0; padding-left: 20px; }
.fold svg { width: 6px; height: 8px; }
.source { display: flex; align-items: center; gap: 1px; height: 20px; padding-left: 12px; border-bottom: 1px solid #e4e4e4; }
.source svg { width: 11px; height: 11px; }
.find { display: flex; align-items: center; gap: 2px; height: 24px; padding-left: 5px; }
.box { display: flex; align-items: center; width: 95px; height: 15px; border: 1px solid #ddd; padding: 0 2px 0 4px; }
.box input { flex: 1; }
.box input::placeholder { color: #999; opacity: 1; }
.box svg, .find svg { width: 8px; height: 8px; }
.find .view { border-left: 1px solid #ddd; padding-left: 2px; }
.find .view svg { width: 16px; }
.side h2 { font-size: 9px; line-height: 12px; font-weight: 700; color: #222; padding: 1px 0 2px 12px; }
.side li { display: flex; align-items: center; padding-left: 12px; gap: 6px; }
.side li svg { width: 9px; height: 7px; }
.side li b { width: 9px; font-size: 5px; color: #5a9a88; }
.dims { display: grid; grid-auto-rows: 14px; border-bottom: 1px solid #ddd; }
.meas { display: grid; grid-auto-rows: 1fr; height: 263px; font-size: 9px; }

.cards { padding: 2px 0 0 3px; display: flex; flex-direction: column; gap: 3px; }
.card { background: #fafafa; border: 1px solid #e2e2e2; padding: 3px; }
.card h3 { font-size: 8px; line-height: 10px; }
.pages { height: 36px; } .filters { height: 49px; } .marks { height: 154px; }
.picker { display: flex; align-items: center; gap: 3px; height: 13px; margin-top: 9px; padding-left: 5px; border: 1px solid #ddd; font-size: 7px; }
.picker svg { width: 8px; height: 8px; }
.picker select { flex: 1; height: 11px; }
.picker::after { content: ""; margin-right: 4px; border: 2px solid transparent; border-top: 3px solid #666; border-bottom: 0; }
.btns { display: grid; grid-template-columns: 29px 30px 29px; gap: 3px; margin: 4px 0 4px; }
.btns button { height: 28px; border: 1px solid #ddd; flex-direction: column; gap: 1px; font-size: 7px; line-height: 10px; }
.btns svg { width: 12px; height: 12px; }
.enc { display: flex; align-items: center; gap: 2px; height: 14px; padding: 0 3px 0 5px; }
.enc svg { width: 10px; height: 10px; }
.enc .pill { flex: 1; }
.pill { display: inline-block; height: 13px; border-radius: 7px; padding: 0 7px; line-height: 13px; color: #fff; white-space: nowrap; }
.green { background: #00b180; } .blue { background: #4996b2; }

.sheet { display: flex; flex-direction: column; padding-left: 2px; }
.shelf { display: flex; align-items: stretch; height: 17px; background: #fafafa; border: 1px solid #ddd; border-right: 0; margin-bottom: 3px; }
.name { width: 85px; display: flex; align-items: center; gap: 4px; padding-left: 4px; border-right: 1px solid #ddd; }
.name svg { width: 7px; height: 7px; }
.drop { display: flex; align-items: center; padding-left: 1px; }
.drop .pill { width: 95px; }
.viz { flex: 1; display: flex; flex-direction: column; background: #fff; border: 1px solid #e0e0e0; margin: 0 127px 4px 0; padding: 0 3px 3px 3px; }
.viz h2 { font: 300 14px/28px "Open Sans", sans-serif; color: #555; padding-left: 3px; }
.mapbox { position: relative; flex: 1; min-height: 0; border: 1px solid #eee; border-left-color: #e6e6e6; }
.map { position: absolute; inset: 0; width: 100%; height: 100%; }
.land { fill: #e4e4e4; }
.ice { fill: #ececec; }
.borders { fill: none; stroke: #adadad; stroke-width: .7px; stroke-linejoin: round; }
.borders path[transform] { stroke-width: 2px; }
.tiny { fill: none; stroke: #6b7680; stroke-width: 1.2px; stroke-linecap: round; }
.maplabel { font: 6px "Open Sans", sans-serif; fill: #aaa; }
.mid { fill: #45505c; }
.big { fill: #4a77a6; }
.credit { position: absolute; left: 52px; bottom: 0; font-size: 7px; }
.unknown { position: absolute; right: 2px; bottom: 3px; width: 62px; height: 13px; background: #adadad; color: #fff; border-radius: 2px; font-weight: 700; font-size: 9px; }

.showme { position: absolute; top: -23px; right: 2px; width: 135px; display: flex; flex-direction: column; align-items: flex-end; filter: drop-shadow(1px 1px 1px #aaa); }
.smtab { width: 69px; height: 23px; background: #fafafa; gap: 3px; font-size: 9px; padding-right: 6px; padding-bottom: 4px; }
.smtab svg { width: 9px; height: 9px; }
.smbody { width: 100%; height: 363px; background: #fafafa; padding: 9px 10px 0 8px; }
.grid { display: grid; grid-template-columns: repeat(3, 1fr); grid-auto-rows: 1fr; gap: 3px; height: 241px; }
.grid button { border: 1px solid #e2e2e2; background: #fff; min-height: 0; overflow: hidden; }
.grid svg { width: 100%; height: 100%; }
.grid .sel { border-color: #cf6a32; }
.try { padding: 11px 0 1px 1px; line-height: 12px; color: #222; }
.need { display: flex; align-items: center; gap: 3px; height: 18px; padding-left: 1px; }
.need svg { width: 7px; height: 7px; }
.note { padding: 5px 8px 0 1px; color: #888; }

.sheets { position: relative; display: flex; height: 19px; background: #e9e9e9; border-top: 1px solid #ddd; color: #777; }
.ds { width: 84px; gap: 0; padding-right: 20px; }
.ds svg { width: 9px; height: 9px; }
.s2016 { width: 96px; }
.s2015 { position: relative; width: 91px; background: #fff; display: flex; align-items: center; padding-left: 3px; }
.s2015 input { width: 100%; font-weight: 700; font-size: 8px; color: #111; }
.cursor { position: absolute; right: 1px; top: 4px; height: 10px; border-left: 1px solid #333; }
.add { width: 17px; margin-left: 1px; border-right: 1px solid #ddd; }
.add svg { width: 10px; height: 10px; fill: none; stroke: #888; stroke-width: .8; }
.add .plus { stroke: #444; stroke-width: 1.2; }
.preview { position: absolute; left: 180px; bottom: 18px; width: 135px; height: 135px; padding: 3px 2px 2px 3px; background: #fff; border: 1px solid #999; overflow: hidden; }
.preview svg { width: 100%; height: 100%; display: block; }
.ring { position: absolute; left: 82px; top: -10px; width: 208px; height: 42px; z-index: 2; }
.status { display: flex; align-items: center; gap: 9px; height: 14px; padding-left: 1px; background: #ececec; border-top: 1px solid #d8d8d8; font-size: 7px; color: #444; }
.seps { margin-left: auto; display: flex; align-items: stretch; height: 13px; }
.seps > * { border-left: 1px solid #ccc; display: flex; align-items: center; }
.c84 { width: 84px; } .c17 { width: 17px; } .c31 { width: 31px; }
.pager { width: 38px; justify-content: space-evenly; }
.pager svg { width: 6px; height: 6px; fill: #999; stroke: #999; stroke-width: .6; display: block; }
.modes { width: 37px; justify-content: space-evenly; }
.modes svg { width: 8px; height: 8px; display: block; }
```
